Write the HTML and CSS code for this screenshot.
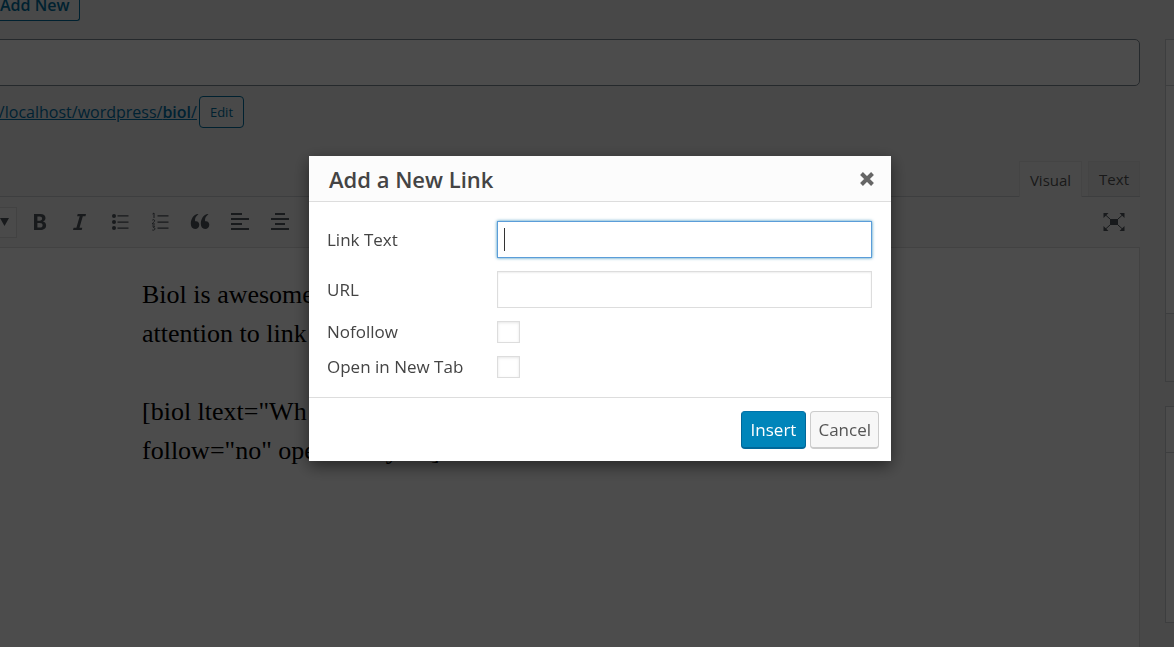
FILE: index.html
```html
<!DOCTYPE html>
<html lang="en">
<head>
<meta charset="utf-8">
<meta name="viewport" content="width=device-width, initial-scale=1">
<title>Add a New Link</title>
<link rel="stylesheet" href="styles.css">
</head>
<body>
<div class="page">
  <main class="main">
    <a class="add-new" href="#">Add New</a>
    <input class="title-input" type="text" aria-label="Title">
    <div class="permalink">
      <a class="permalink-url" href="#">//localhost/wordpress/<b>biol</b>/</a>
      <button class="edit" type="button">Edit</button>
    </div>
    <div class="tabs">
      <button class="tab tab-active" type="button">Visual</button>
      <button class="tab" type="button">Text</button>
    </div>
    <div class="toolbar">
      <button class="format" type="button" aria-label="Format"><svg width="10" height="8" viewBox="0 0 10 8"><path d="M0 0h9L4.500 8z"/></svg></button>
      <button class="tool" type="button" aria-label="Bold"><svg viewBox="0 0 20 20"><path fill-rule="evenodd" d="M4 2h6.200c3.400 0 5.300 1.500 5.300 4.100 0 1.800-1 3-2.600 3.500 2 .4 3.200 1.800 3.200 3.900 0 2.900-2.200 4.500-5.900 4.500H4zm3.400 2.500v4.200h2.300c1.600 0 2.400-.8 2.400-2.100s-.8-2.100-2.500-2.100zm0 6.500v4.500h2.500c1.800 0 2.700-.8 2.700-2.300 0-1.400-1-2.200-2.800-2.200z"/></svg></button>
      <button class="tool" type="button" aria-label="Italic"><svg viewBox="0 0 20 20"><path d="M7.700 2H16l-.5 2.200h-2.700l-3.300 11.600h2.800l-.6 2.200H3l.6-2.200h2.800l3.300-11.600H7.100z"/></svg></button>
      <button class="tool" type="button" aria-label="Bulleted list"><svg viewBox="0 0 20 20"><circle cx="4" cy="4" r="2"/><circle cx="4" cy="10" r="2"/><circle cx="4" cy="16" r="2"/><path d="M7.500 3.300h11v1.300h-11zM7.500 9.400h11v1.300h-11zM7.500 15.500h11v1.300h-11z"/></svg></button>
      <button class="tool" type="button" aria-label="Numbered list"><svg viewBox="0 0 20 20"><path d="M7.500 3.300h11v1.300h-11zM7.500 9.400h11v1.300h-11zM7.500 15.500h11v1.300h-11z"/><path class="line" d="M2.500 2L4 1v5M2.300 8.200C3 7.300 4.800 7.500 4.600 8.800 4.500 9.800 2.700 10.700 2.300 12h2.600M2.300 14h2.300L3.400 15.500c2 0 2 2.700-.1 2.700l-1-.2"/></svg></button>
      <button class="tool" type="button" aria-label="Blockquote"><svg viewBox="0 0 20 20"><path d="M8.500 2.500C5 4.500 4.800 7.500 5.200 9.300c2.200-.6 4.100 1 4.100 3.500 0 2.400-1.700 4.200-4.200 4.200C2.300 17 .8 14.900.8 11.800.8 7 3.300 3.200 7.300 2zM18.500 2.500c-3.500 2-3.700 5-3.300 6.800 2.200-.6 4.100 1 4.100 3.500 0 2.400-1.700 4.200-4.200 4.200-2.800 0-4.300-2.100-4.300-5.200 0-4.800 2.500-8.600 6.500-9.800z"/></svg></button>
      <button class="tool" type="button" aria-label="Align left"><svg viewBox="0 0 20 20"><path d="M1 1h11v2H1zM1 6h18v2H1zM1 11h11v2H1zM1 16h18v2H1z"/></svg></button>
      <button class="tool" type="button" aria-label="Align center"><svg viewBox="0 0 20 20"><path d="M5 1h10v2H5zM1 6h18v2H1zM5 11h10v2H5zM1 16h18v2H1z"/></svg></button>
      <button class="tool tool-expand" type="button" aria-label="Distraction-free writing"><svg viewBox="0 0 22 18"><path d="M7 6h8v6H7zM.5 0h5L.5 5zM21.500 0h-5l5 5zM.5 18h5l-5-5zM21.500 18h-5l5-5z"/><path class="line" d="M2 1.500l5 4.500M20 1.500l-5 4.500M2 16.500l5-4.500M20 16.500l-5-4.500"/></svg></button>
    </div>
    <div class="editor">
      <p>Biol is awesome<br>attention to link</p>
      <p>[biol ltext="Wh<br>follow="no" opentab="yes"]</p>
    </div>
  </main>
  <aside class="side">
    <section class="box publish"><div class="box-head"></div><div class="box-foot"></div></section>
    <section class="box categories"><div class="box-head"></div></section>
  </aside>
</div>

<div class="overlay">
  <form class="modal" role="dialog" aria-labelledby="dialog-title">
    <header class="modal-head">
      <h1 id="dialog-title">Add a New Link</h1>
      <button class="close" type="button" aria-label="Close"><svg width="16" height="16" viewBox="0 0 16 16"><path d="M2.500 2.500l11 11M13.500 2.500l-11 11"/></svg></button>
    </header>
    <div class="fields">
      <label for="link-text">Link Text</label>
      <input class="text-field" id="link-text" type="text" autofocus>
      <label for="url">URL</label>
      <input class="text-field" id="url" type="text">
      <label for="nofollow">Nofollow</label>
      <input class="check" id="nofollow" type="checkbox">
      <label for="new-tab">Open in New Tab</label>
      <input class="check" id="new-tab" type="checkbox">
    </div>
    <footer class="modal-foot">
      <button class="button primary" type="button">Insert</button>
      <button class="button" type="button">Cancel</button>
    </footer>
  </form>
</div>
</body>
</html>
```
FILE: styles.css
```css
* {
  box-sizing: border-box;
}

body {
  margin: 0;
  overflow: hidden;
  background: #f1f1f1;
  color: #444;
  font-family: "Segoe UI", "Open Sans", "Noto Sans", sans-serif;
  font-size: 16px;
}

button,
input {
  font: inherit;
  color: inherit;
}

.page {
  display: flex;
  gap: 25px;
  min-height: 100vh;
}

.main {
  flex: 1;
  display: flex;
  flex-direction: column;
  align-items: stretch;
}

.add-new {
  align-self: flex-start;
  height: 21px;
  padding: 0 10px 0 0;
  border: solid #0071a1;
  border-width: 0 1px 1px 0;
  border-radius: 0 0 3px 0;
  background: #f3f5f6;
  color: #0071a1;
  font-size: 16px;
  font-weight: 600;
  line-height: 10px;
  text-decoration: none;
}

.title-input {
  height: 47px;
  margin: 18px 0 10px -8px;
  border: 1px solid #7e8993;
  border-radius: 5px;
  background: #fff;
}

.permalink {
  display: flex;
  align-items: center;
  gap: 2px;
  height: 32px;
  margin-left: -7px;
}

.permalink-url {
  color: #0073aa;
  line-height: 24px;
}

.permalink-url b {
  font-weight: 600;
}

.edit {
  height: 32px;
  padding: 0 10px;
  border: 1px solid #0071a1;
  border-radius: 4px;
  background: #f3f5f6;
  color: #0071a1;
  font-size: 13px;
}

.tabs {
  display: flex;
  justify-content: flex-end;
  gap: 6px;
  margin-top: 33px;
}

.tab {
  height: 35px;
  padding: 0 10px;
  border: 1px solid #e5e5e5;
  border-bottom: 0;
  background: #ebebeb;
  color: #555;
  font-size: 15px;
}

.tab-active {
  position: relative;
  margin-bottom: -1px;
  height: 36px;
  background: #f5f5f5;
}

.toolbar {
  display: flex;
  align-items: center;
  height: 51px;
  border-top: 1px solid #ccd0d4;
  background: #f5f5f5;
}

.format {
  display: flex;
  align-items: center;
  width: 17px;
  height: 31px;
  margin-right: 3px;
  padding: 0;
  border: solid #ddd;
  border-width: 1px 1px 1px 0;
  background: #f8f8f8;
}

.format svg,
.tool svg {
  fill: #50575e;
}

.tool {
  display: flex;
  align-items: center;
  justify-content: center;
  width: 40px;
  height: 40px;
  padding: 0;
  border: 0;
  background: none;
}

.tool svg {
  width: 20px;
  height: 20px;
}

.tool .line {
  fill: none;
  stroke: #50575e;
}

.tool-expand {
  margin: 0 6px 0 auto;
}

.tool-expand svg {
  width: 22px;
  height: 18px;
}

.editor {
  flex: 1;
  padding: 27px 20px 0 142px;
  border: solid #ddd;
  border-width: 1px 1px 0 0;
  background: #fff;
  color: #000;
  font-family: "Liberation Serif", "Times New Roman", serif;
  font-size: 26px;
  line-height: 39px;
}

.editor p {
  margin: 0 0 39px;
}

.side {
  width: 9px;
  padding-top: 39px;
}

.box {
  display: flex;
  flex-direction: column;
  margin-bottom: 24px;
  border: solid #ccd0d4;
  border-width: 1px 0 1px 1px;
  background: #fff;
}

.box-head {
  height: 46px;
  border-bottom: 1px solid #ccd0d4;
}

.box-foot {
  height: 68px;
  margin-top: auto;
  border-top: 1px solid #ccd0d4;
  background: #f5f5f5;
}

.publish {
  height: 343px;
}

.categories {
  height: 217px;
}

.overlay {
  position: fixed;
  inset: 0;
  z-index: 10;
  display: flex;
  align-items: flex-start;
  justify-content: center;
  padding: 156px 0 0 26px;
  background: rgba(0, 0, 0, 0.7);
}

.modal {
  width: 582px;
  background: #fff;
  box-shadow: 0 5px 15px rgba(0, 0, 0, 0.5);
}

.modal-head {
  display: flex;
  align-items: center;
  justify-content: space-between;
  height: 46px;
  padding: 0 16px 0 20px;
  border-bottom: 1px solid #ddd;
  background: #fcfcfc;
}

.modal-head h1 {
  margin: 0;
  font-size: 22px;
  font-weight: 600;
  line-height: 30px;
}

.close {
  display: flex;
  padding: 0;
  border: 0;
  background: none;
}

.close path {
  stroke: #666;
  stroke-width: 4;
}

.fields {
  display: grid;
  grid-template-columns: 170px 1fr;
  row-gap: 13px;
  align-items: center;
  padding: 19px 19px 19px 18px;
  font-size: 17px;
  line-height: 22px;
}

.text-field {
  width: 100%;
  height: 37px;
  padding: 0 6px;
  border: 1px solid #ddd;
  background: #fff;
  box-shadow: inset 0 1px 2px rgba(0, 0, 0, 0.07);
  outline: none;
}

.text-field:focus {
  border-color: #5b9dd9;
  background: linear-gradient(#333, #333) 6px center / 1px 23px no-repeat #fff;
  box-shadow: 0 0 3px rgba(0, 115, 170, 0.8);
  caret-color: transparent;
}

.check {
  appearance: none;
  width: 23px;
  height: 22px;
  margin: 0;
  border: 1px solid #ddd;
  background: #fff;
  box-shadow: inset 0 1px 3px rgba(0, 0, 0, 0.1);
}

.modal-foot {
  display: flex;
  justify-content: flex-end;
  gap: 4px;
  padding: 13px 12px 12px;
  border-top: 1px solid #ddd;
}

.button {
  height: 38px;
  padding: 0 7px;
  border: 1px solid #ccc;
  border-bottom-width: 2px;
  border-radius: 4px;
  background: #f7f7f7;
  color: #555;
  font-size: 17px;
}

.primary {
  padding: 0 9px;
  border-color: #0073aa #006799 #006799;
  background: #0085ba;
  color: #fff;
}
```
